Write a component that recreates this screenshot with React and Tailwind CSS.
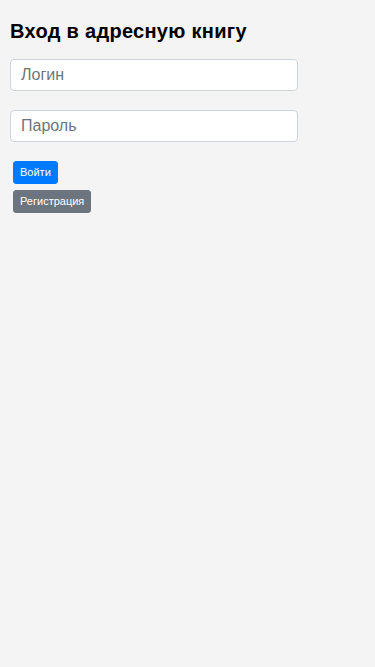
export default function App() {
  return (
    <div className="min-h-screen bg-[#f4f4f4] px-[10px] pt-[19px] font-['Liberation_Sans',Arial,sans-serif]">
      <h1 className="text-[20px] font-bold leading-[24px] tracking-[0.3px] text-black">
        Вход в адресную книгу
      </h1>

      {/* FORM */}
      <div className="mt-[16px] w-[288px]">
        <input
          type="text"
          placeholder="Логин"
          className="block h-[32px] w-full rounded-[4px] border border-[#ced4da] bg-white px-[10px] text-[16px] text-[#495057] placeholder:text-[#6c757d] outline-none"
        />
        <input
          type="password"
          placeholder="Пароль"
          className="mt-[19px] block h-[32px] w-full rounded-[4px] border border-[#ced4da] bg-white px-[10px] text-[16px] text-[#495057] placeholder:text-[#6c757d] outline-none"
        />
      </div>

      <div className="mt-[19px] flex flex-col items-start gap-[6px] pl-[3px]">
        <button className="h-[23px] rounded-[3px] border border-[#007bff] bg-[#007bff] px-[6px] text-[11px] leading-none text-white">
          Войти
        </button>
        <button className="h-[23px] rounded-[3px] border border-[#6c757d] bg-[#6c757d] px-[6px] text-[11px] leading-none text-white">
          Регистрация
        </button>
      </div>
    </div>
  )
}
